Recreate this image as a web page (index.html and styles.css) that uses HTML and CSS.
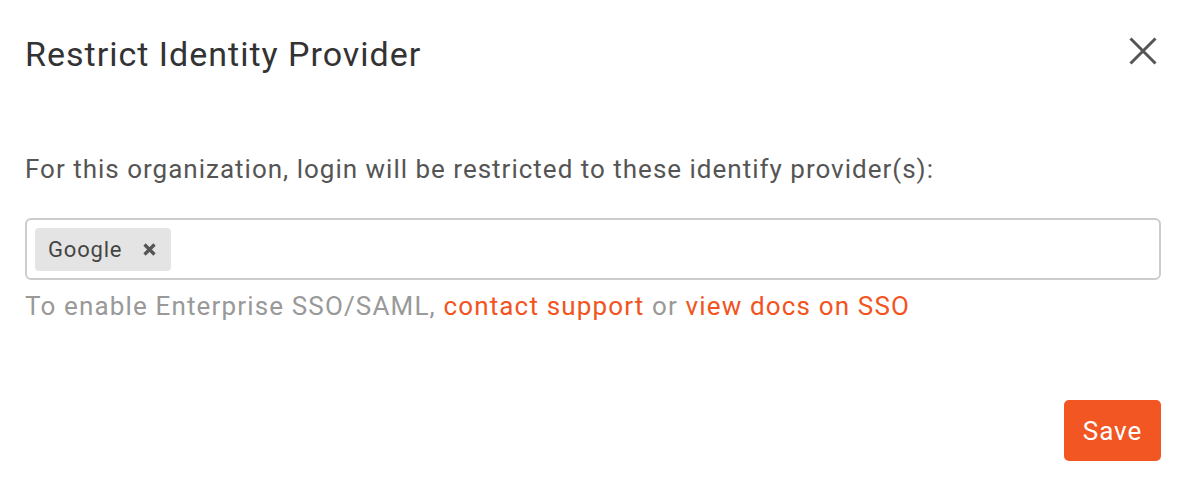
FILE: index.html
```html
<!DOCTYPE html>
<html lang="en">
<head>
    <meta charset="UTF-8">
    <meta name="viewport" content="width=device-width, initial-scale=1.0">
    <title>Restrict Identity Provider</title>
    <link rel="stylesheet" href="styles.css">
</head>
<body>
    <div class="modal">
        <div class="modal-header">
            <h1>Restrict Identity Provider</h1>
            <button type="button" class="btn-close" aria-label="Close">
                <svg width="28" height="28" viewBox="0 0 28 28">
                    <path d="M1.5 1.5L26.5 26.5M26.5 1.5L1.5 26.5" stroke="#555" stroke-width="3" fill="none"/>
                </svg>
            </button>
        </div>

        <p class="intro">For this organization, login will be restricted to these identify provider(s):</p>

        <div class="select-box">
            <span class="chip">Google
                <svg class="chip-remove" width="13" height="13" viewBox="0 0 13 13">
                    <path d="M1.5 1.5L11.5 11.5M11.5 1.5L1.5 11.5" stroke="#555" stroke-width="3.2" fill="none"/>
                </svg>
            </span>
        </div>
        <p class="help">To enable Enterprise SSO/SAML, <a href="#">contact support</a> or <a href="#">view docs on SSO</a></p>

        <div class="modal-footer">
            <button type="button" class="btn-save">Save</button>
        </div>
    </div>
</body>
</html>
```

FILE: styles.css
```css
body {
    font-family: Roboto, "Liberation Sans", Arial, sans-serif;
    margin: 0;
    padding: 0;
    background: #fff;
}
.modal {
    padding: 29px 27px 26px 25px;
}
.modal-header {
    display: flex;
    justify-content: space-between;
    align-items: flex-start;
}
h1 {
    margin: 0;
    font-size: 34px;
    font-weight: 400;
    letter-spacing: 1px;
    color: #333;
    line-height: 50px;
}
.btn-close {
    background: none;
    border: none;
    padding: 0;
    margin: 8px 4px 0 0;
    width: 28px;
    height: 28px;
    display: flex;
    cursor: pointer;
}
.intro {
    margin: 74px 0 0;
    font-size: 26px;
    letter-spacing: 1px;
    color: #555;
    line-height: 32px;
}
.select-box {
    margin-top: 33px;
    border: 2px solid #ccc;
    border-radius: 6px;
    padding: 8px 8px 7px;
    display: flex;
}
.chip {
    background: #e4e4e4;
    border-radius: 4px;
    padding: 0 15px 0 13px;
    height: 43px;
    display: flex;
    align-items: center;
    font-size: 22px;
    letter-spacing: 0.8px;
    color: #444;
}
.chip-remove {
    margin-left: 21px;
}
.help {
    margin: 8px 0 0;
    font-size: 26px;
    letter-spacing: 1.15px;
    color: #999;
    line-height: 36px;
}
.help a {
    color: #f2541e;
    text-decoration: none;
}
.modal-footer {
    display: flex;
    justify-content: flex-end;
    margin-top: 76px;
}
.btn-save {
    background: #f25623;
    color: #fff;
    border: none;
    border-radius: 5px;
    width: 97px;
    height: 61px;
    font-family: Roboto, sans-serif;
    font-size: 26px;
    letter-spacing: 1px;
    cursor: pointer;
}
```
